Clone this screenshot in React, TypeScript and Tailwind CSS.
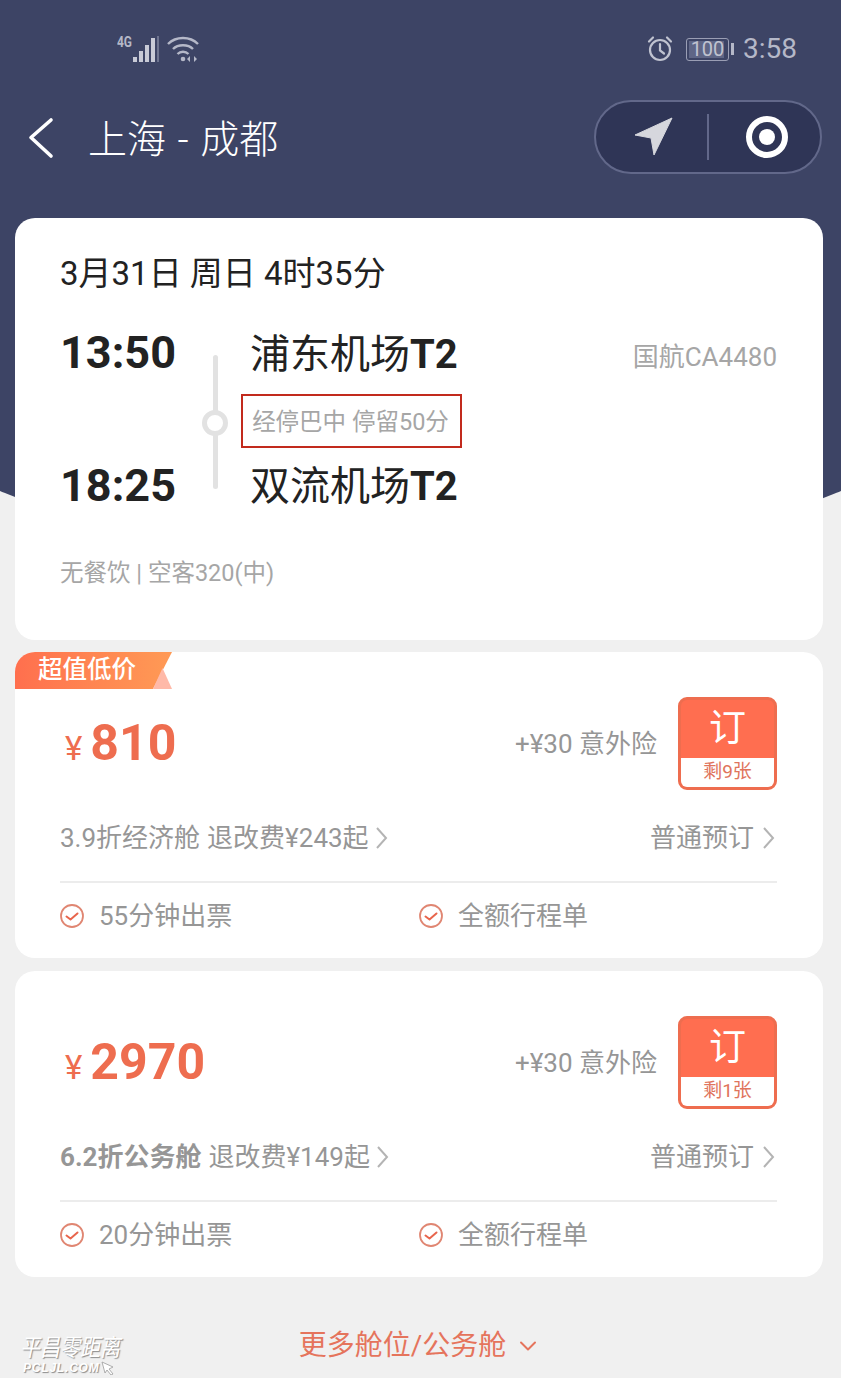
import { ChevronDown } from "lucide-react";

const cjk = "font-['Roboto','Noto_Sans_CJK_SC',sans-serif]";

function CheckMark({ className }: { className?: string }) {
  return (
    <svg width="26" height="26" viewBox="0 0 26 26" fill="none" className={`shrink-0 ${className ?? ""}`}>
      <circle cx="13" cy="13" r="11" stroke="#e08672" strokeWidth="1.8" />
      <path d="M7.5 13.5l4 3 7-6" stroke="#e8654c" strokeWidth="2" strokeLinecap="round" strokeLinejoin="round" />
    </svg>
  );
}

function Chev({ className }: { className?: string }) {
  return (
    <svg width="13" height="24" viewBox="0 0 13 24" fill="none" stroke="#b4b4b4" strokeWidth="2" className={className}>
      <path d="M2 2l9 10-9 10" />
    </svg>
  );
}

function FareCard({
  price,
  seats,
  boldLeft,
  fee,
  time,
  book,
  badge,
}: {
  price: string;
  seats: string;
  boldLeft?: boolean;
  fee: string;
  time: string;
  book: string;
  badge?: boolean;
}) {
  return (
    <div className="relative ml-[15px] mr-[18px] h-[306px] rounded-[20px] bg-white pl-[45px] pr-[46px]">
      {badge && (
        <div className="absolute left-0 top-0 h-[37px] w-[157px]">
          <div className="flex h-full w-full items-center rounded-tl-[20px] bg-gradient-to-r from-[#ff6f4e] to-[#ff9a55] pl-[23px] text-[24.5px] font-medium text-white [clip-path:polygon(0_0,100%_0,138px_100%,0_100%)]">
            超值低价
          </div>
          <div className="absolute left-[138px] top-[16px] h-[21px] w-[19px] bg-[#ffb9a8] [clip-path:polygon(50%_0,100%_100%,0_100%)]" />
        </div>
      )}
      <div className="flex h-[136px] items-center pt-[46px] text-[#ee6d4f]">
        <div className="flex items-baseline">
          <span className="pl-[5px] text-[33px]">¥</span>
          <span className="pl-[8px] text-[50px] font-bold">{price}</span>
        </div>
        <div className="ml-auto mr-[21px] pt-[3px] text-[26px] text-[#969696]">+¥30 意外险</div>
        <div className="flex h-[93px] w-[99px] flex-col overflow-hidden rounded-[9px] border-[3px] border-[#ee6d4f] bg-[#ff6e50]">
          <div className="flex h-[58px] items-center justify-center text-[37px] leading-none text-white">订</div>
          <div className="flex flex-1 items-center justify-center bg-white text-[19px] text-[#e0745c]">{seats}</div>
        </div>
      </div>
      <div className="mt-[32px] flex h-[36px] items-center justify-between text-[26px] text-[#969696]">
        <div className="flex items-center">
          {boldLeft ? <span className="font-bold">6.2折公务舱</span> : <span>3.9折经济舱</span>}
          <span className="ml-[7px]">退改费{fee}</span>
          <Chev className="ml-[6px]" />
        </div>
        <div className="flex items-center">
          普通预订
          <Chev className="ml-[8px] mr-[2px]" />
        </div>
      </div>
      <div className="mt-[25px] h-[2px] bg-[#ececec]" />
      <div className="flex h-[66px] items-center text-[26px] text-[#969696]">
        <div className="flex w-[358px] items-center gap-[14px]">
          <CheckMark className="ml-[-1px]" />
          {time}
        </div>
        <div className="flex items-center gap-[14px]">
          <CheckMark />
          {book}
        </div>
      </div>
    </div>
  );
}

export default function App() {
  return (
    <div className={`${cjk} relative h-[1378px] w-[841px] overflow-hidden bg-[#f0f0f0]`}>
      {/* navy backdrop with the curved lower edge */}
      <div className="absolute left-[-80px] top-[-500px] h-[1055px] w-[1001px] rounded-b-[50%_140px] bg-[#3d4465]" />

      <div className="relative">
        {/* status bar */}
        <div className="flex h-[100px] items-center pb-[2px] pl-[117px] pr-[44px] text-[#b5b8c8]">
          <div className="flex items-end gap-[8px]">
            <svg width="42" height="28" viewBox="0 0 42 28" fill="none">
              <text x="0" y="12" fontSize="14" fontWeight="700" fill="#b5b8c8" fontFamily="Roboto, sans-serif" textLength="15" lengthAdjust="spacingAndGlyphs">4G</text>
              <rect x="16" y="22" width="4" height="5" fill="#c8cad6" />
              <rect x="22" y="16" width="4" height="11" fill="#c8cad6" />
              <rect x="28" y="10" width="4" height="17" fill="#c8cad6" />
              <rect x="34" y="3" width="4" height="24" fill="#c8cad6" />
              <rect x="40" y="1" width="2" height="26" fill="#6e7490" />
            </svg>
            <svg width="32" height="28" viewBox="0 0 32 28" fill="none" stroke="#b5b8c8" strokeWidth="2.4">
              <path d="M1 9c8-8 22-8 30 0" />
              <path d="M6 14c5-5 15-5 20 0" />
              <path d="M10.500 19c3-3 8-3 11 0" />
              <circle cx="16" cy="24" r="2.300" fill="#b5b8c8" stroke="none" />
              <path d="M23 21l-3 3 3 3zM27 21l3 3-3 3z" fill="#b5b8c8" stroke="none" />
            </svg>
          </div>
          <div className="ml-auto flex items-center">
            <svg width="28" height="28" viewBox="0 0 28 28" fill="none" stroke="#c0c3d0" strokeWidth="2.2">
              <circle cx="14" cy="15" r="10" />
              <path d="M14 9v6.500l4 3" strokeLinecap="round" />
              <path d="M3 6.500l4-4M25 6.500l-4-4" strokeLinecap="round" />
            </svg>
            <div className="ml-[12px] flex items-center">
              <div className="relative flex h-[23px] w-[43px] items-center justify-center rounded-[3px] border border-[#9a9eb4] text-[20px] leading-none text-[#c0c3d0]">
                <div className="absolute inset-[2px] right-[4px] bg-[#5f6686]" />
                <span className="relative">100</span>
              </div>
              <div className="ml-[2px] h-[12px] w-[3px] bg-[#b5b8c8]" />
            </div>
            <span className="ml-[9px] text-[28px] text-[#b5b8c8]">3:58</span>
          </div>
        </div>

        {/* title row */}
        <div className="flex h-[76px] items-center pl-[28px] pr-[19px] text-white">
          <svg width="26" height="42" viewBox="0 0 26 42" fill="none" stroke="white" strokeWidth="3.600" strokeLinecap="round" strokeLinejoin="round" className="mt-[-1px]">
            <path d="M23 3L3 20.500 23 39" />
          </svg>
          <span className="ml-[34px] pt-[4px] text-[39px] font-light [word-spacing:2px]">上海 - 成都</span>
          <div className="mb-[2px] ml-auto flex h-[74px] w-[228px] items-center rounded-full border-2 border-[#62688a] bg-[#2f3556]">
            <div className="flex w-[111px] justify-center pl-[4px]">
              <svg width="40" height="40" viewBox="0 0 40 40">
                <path d="M38 1L1 18l16 3 3 17z" fill="#d6d7dd" stroke="#d6d7dd" strokeWidth="1" strokeLinejoin="round" />
              </svg>
            </div>
            <div className="h-[46px] w-[2px] bg-[#62688a]" />
            <div className="flex flex-1 justify-center pl-[4px]">
              <div className="flex h-[42px] w-[42px] items-center justify-center rounded-full border-[6px] border-white">
                <div className="h-[16px] w-[16px] rounded-full bg-white" />
              </div>
            </div>
          </div>
        </div>

        {/* flight card */}
        <div className="ml-[15px] mr-[18px] mt-[42px] h-[422px] rounded-[20px] bg-white pl-[45px] pr-[46px] pt-[36px]">
          <div className="text-[33px] leading-[40px] text-[#222222]">3月31日 周日 4时35分</div>
          <div className="relative mt-[30px] flex h-[196px]">
            <div className="flex w-[138px] flex-col justify-between pt-[3px] text-[45px] leading-[52px] font-bold text-[#222222]">
              <span>13:50</span>
              <span className="mb-[8px]">18:25</span>
            </div>
            <div className="relative ml-[14px] w-[6px]">
              <div className="mx-auto mt-[31px] h-[134px] w-[5px] rounded-full bg-[#e2e2e2]" />
              <div className="absolute left-[-10px] top-[86px] h-[26px] w-[26px] rounded-full border-[5px] border-[#e2e2e2] bg-white" />
            </div>
            <div className="ml-[32px] flex flex-1 flex-col text-[40px] leading-[52px] text-[#222222]">
              <span className="pt-[5px]">
                浦东机场<b className="font-bold">T2</b>
              </span>
              <div className="ml-[-9px] mt-[13px] flex h-[54px] w-[221px] items-center justify-center border-2 border-[#c22a1d] pr-[2px] pt-[3px] text-[23.5px] leading-none text-[#a6a6a6]">
                经停巴中 停留50分
              </div>
              <span className="mt-[13px]">
                双流机场<b className="font-bold">T2</b>
              </span>
            </div>
            <div className="absolute right-0 top-[15px] text-[26px] leading-[36px] text-[#a6a6a6]">国航CA4480</div>
          </div>
          <div className="mt-[36px] text-[23.5px] leading-[34px] text-[#a6a6a6]">无餐饮 | 空客320(中)</div>
        </div>

        <div className="mt-[12px] flex flex-col gap-[13px]">
          <FareCard price="810" seats="剩9张" fee="¥243起" time="55分钟出票" book="全额行程单" badge />
          <FareCard price="2970" seats="剩1张" boldLeft fee="¥149起" time="20分钟出票" book="全额行程单" />
        </div>

        {/* more cabins */}
        <div className="mt-[47px] flex items-center justify-center text-[28px] leading-[44px] text-[#e5745c]">
          <span>更多舱位/公务舱</span>
          <ChevronDown size={28} strokeWidth={1.7} className="ml-[8px]" />
        </div>
      </div>

      {/* watermark */}
      <div className="absolute left-[20px] top-[1333px] flex w-[104px] flex-col items-start italic text-white [text-shadow:1px_1px_1px_#8a8a8a]">
        <span className="origin-top-left scale-y-[1.2] text-[20px] leading-[24px]">平昌零距离</span>
        <div className="mt-[4px] flex items-center">
          <span className="pl-[3px] font-['Liberation_Sans',sans-serif] text-[12px] font-bold leading-[12px] tracking-[0.8px]">PCLJL.COM</span>
          <svg width="14" height="14" viewBox="0 0 14 14" className="ml-[1px]">
            <path d="M1 1l11 5-4 2 4 5-2 1-4-5-2 3z" fill="white" stroke="#9a9a9a" strokeWidth="0.8" />
          </svg>
        </div>
      </div>
    </div>
  );
}
